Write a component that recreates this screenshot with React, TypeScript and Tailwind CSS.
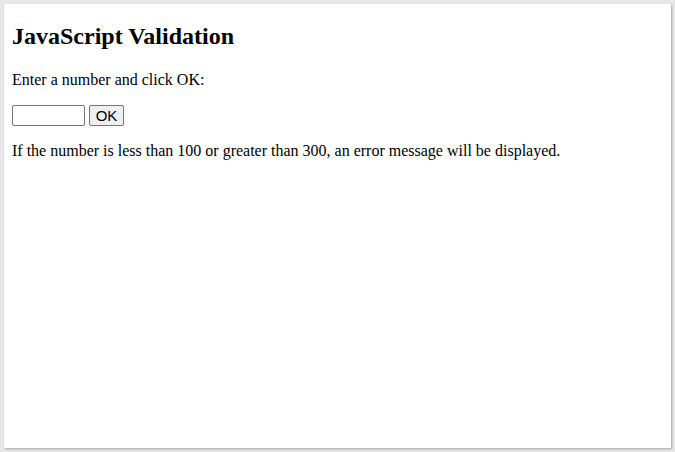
import React from 'react';

const App: React.FC = () => {
  return (
    <div className="w-[675px] h-[452px] bg-[#e7e7e7] pt-[4px] pl-[4px] overflow-hidden">
      <div className="w-[667px] h-[444px] bg-white shadow-[1px_1px_2px_rgba(0,0,0,0.3)] px-[8px] py-px font-['Liberation_Serif',serif] text-black">
        {/* Heading */}
        <h2 className="text-[24px] font-bold mt-[18px] mb-[21px] leading-[27px]">JavaScript Validation</h2>

        <p className="text-[16px] leading-[18px] mb-[16px]">Enter a number and click OK:</p>

        {/* Input row */}
        <p className="flex items-center gap-[4px] mb-[16px]">
          <input
            type="text"
            className="w-[73px] h-[21px] border border-[#767676] rounded-[2px] bg-white px-[2px] text-[13px] font-['Liberation_Sans',sans-serif] outline-none"
          />
          <button className="w-[35px] h-[21px] border border-[#767676] rounded-[2px] bg-[#efefef] text-[15px] leading-none font-['Liberation_Sans',sans-serif] text-black">
            OK
          </button>
        </p>

        <p className="text-[16px] leading-[18px]">
          If the number is less than 100 or greater than 300, an error message will be displayed.
        </p>
      </div>
    </div>
  );
};

export default App;
